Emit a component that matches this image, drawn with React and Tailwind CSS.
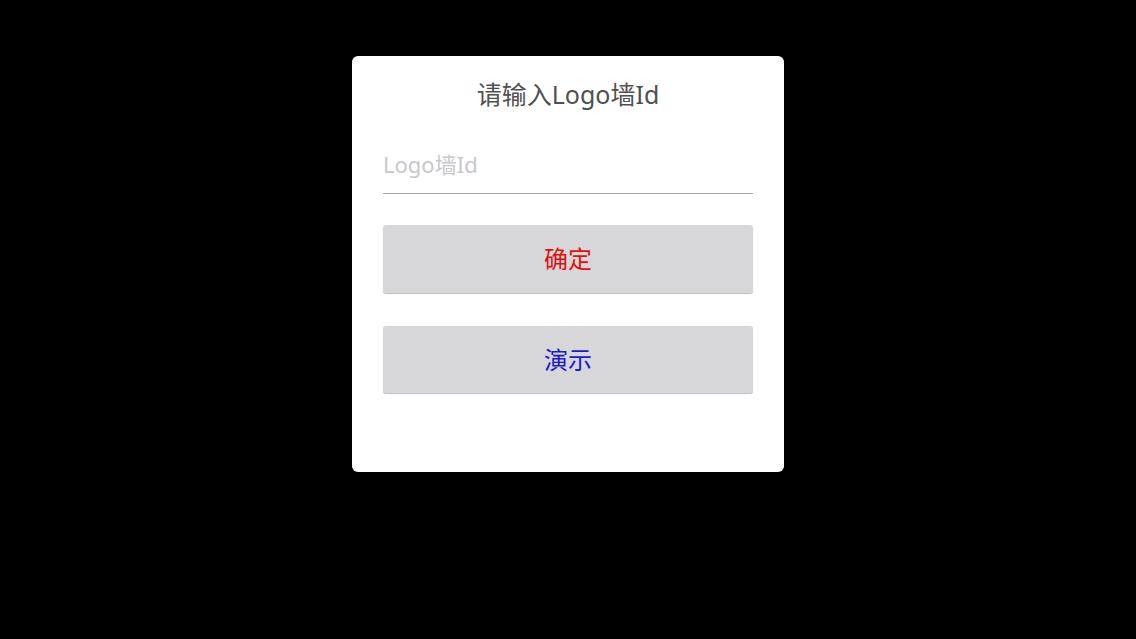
import { useState } from "react";

export default function App() {
  const [wallId, setWallId] = useState("");

  return (
    <div
      className="min-h-[639px] w-full bg-black flex justify-center items-start pt-[56px]"
      style={{ fontFamily: '"Noto Sans", "Noto Sans CJK SC", sans-serif' }}
    >
      <div className="w-[432px] h-[416px] bg-white rounded-[6px] px-[31px] pt-[22px] flex flex-col">
        <h1 className="text-center text-[25px] leading-[32px] text-[#505050]">
          请输入Logo墙Id
        </h1>

        <input
          type="text"
          value={wallId}
          onChange={(e) => setWallId(e.target.value)}
          placeholder="Logo墙Id"
          className="mt-[28px] h-[56px] w-full pb-[4px] border-b border-[#a8a8a8] bg-transparent text-[22px] text-[#333] outline-none placeholder:text-[#c8c8cc]"
        />

        <button className="mt-[31px] h-[68px] w-full rounded-[3px] bg-[#d7d6d8] shadow-[0_1px_1px_rgba(0,0,0,0.25)] text-[24px] text-[#e01010]">
          确定
        </button>

        <button className="mt-[33px] h-[67px] w-full rounded-[3px] bg-[#d7d6d8] shadow-[0_1px_1px_rgba(0,0,0,0.25)] text-[24px] text-[#1a1ad0]">
          演示
        </button>
      </div>
    </div>
  );
}
